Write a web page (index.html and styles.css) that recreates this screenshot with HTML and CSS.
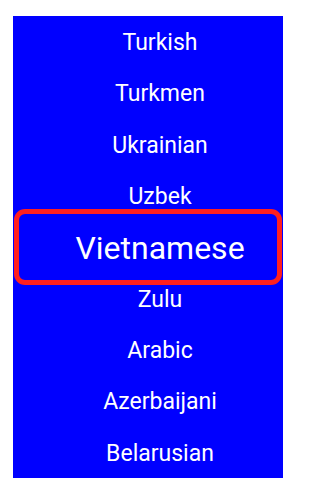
FILE: index.html
```html
<!DOCTYPE html>
<html>
<head>
<meta charset="utf-8">
<link rel="stylesheet" href="styles.css">
</head>
<body>
<div class="picker">
  <div class="row">Turkish</div>
  <div class="row">Turkmen</div>
  <div class="row">Ukrainian</div>
  <div class="row">Uzbek</div>
  <div class="row selected">Vietnamese</div>
  <div class="row">Zulu</div>
  <div class="row">Arabic</div>
  <div class="row">Azerbaijani</div>
  <div class="row">Belarusian</div>
  <div class="highlight"></div>
</div>
</body>
</html>
```
FILE: styles.css
```css
html, body {
  margin: 0;
  padding: 0;
  background: #ffffff;
}
body {
  padding: 16px 0 0 13px;
  font-family: Roboto, "Noto Sans", sans-serif;
}
.picker {
  position: relative;
  width: 270px;
  height: 462px;
  background: #0000ff;
  display: flex;
  flex-direction: column;
}
.row {
  box-sizing: border-box;
  height: 51.33px;
  display: flex;
  align-items: center;
  justify-content: center;
  padding: 2px 0 0 24px;
  color: #ffffff;
  font-size: 23px;
  line-height: 1;
}
.row.selected {
  font-size: 32px;
}
.highlight {
  position: absolute;
  left: 1px;
  top: 193px;
  width: 268px;
  height: 76px;
  box-sizing: border-box;
  border: 5px solid #ff1f1f;
  border-radius: 11px;
}
```
